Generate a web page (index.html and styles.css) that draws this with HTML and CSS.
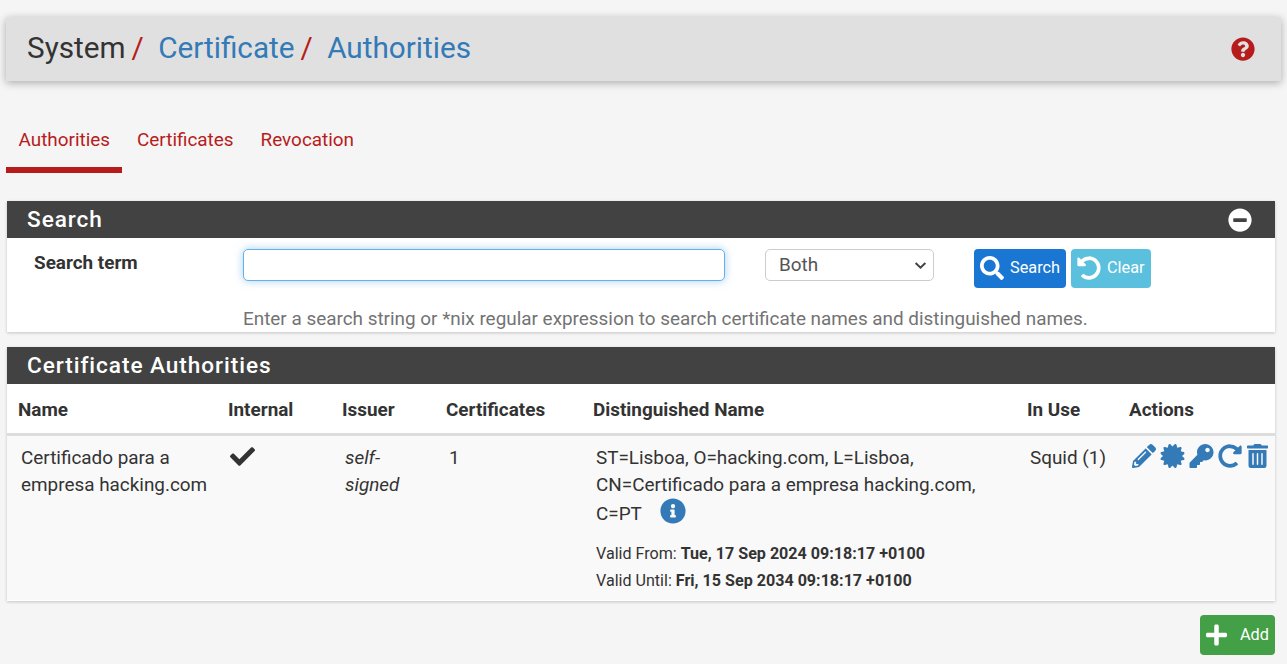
FILE: index.html
```html
<!DOCTYPE html>
<html lang="en">
<head>
<meta charset="utf-8">
<title>System / Certificate / Authorities</title>
<link rel="stylesheet" href="styles.css">
</head>
<body>
<header class="page-header">
  <h1 class="crumbs">
    <span>System</span><span class="sep">/</span>
    <a href="#">Certificate</a><span class="sep">/</span>
    <a href="#">Authorities</a>
  </h1>
  <svg class="help-icon" viewBox="0 0 512 512"><path d="M504 256c0 136.997-111.043 248-248 248S8 392.997 8 256C8 119.083 119.043 8 256 8s248 111.083 248 248zM262.655 90c-54.497 0-89.255 22.957-116.549 63.758-3.536 5.286-2.353 12.415 2.715 16.258l34.699 26.31c5.205 3.947 12.621 3.008 16.665-2.122 17.864-22.658 30.113-35.797 57.303-35.797 20.429 0 45.698 13.148 45.698 32.958 0 14.976-12.363 22.667-32.534 33.976C247.128 238.528 216 254.941 216 296v4c0 6.627 5.373 12 12 12h56c6.627 0 12-5.373 12-12v-1.333c0-28.462 83.186-29.647 83.186-106.667 0-58.002-60.165-102-116.531-102zM256 338c-25.365 0-46 20.635-46 46 0 25.364 20.635 46 46 46s46-20.636 46-46c0-25.365-20.635-46-46-46z"/></svg>
</header>

<nav class="tabs">
  <a class="tab active" href="#">Authorities</a>
  <a class="tab" href="#">Certificates</a>
  <a class="tab" href="#">Revocation</a>
</nav>

<section class="panel search-panel">
  <div class="panel-heading">
    <h2>Search</h2>
    <svg class="collapse-icon" viewBox="0 0 512 512"><circle class="collapse-bg" cx="256" cy="256" r="200"/><path d="M256 8C119 8 8 119 8 256s111 248 248 248 248-111 248-248S393 8 256 8zM124 296c-6.6 0-12-5.4-12-12v-56c0-6.6 5.4-12 12-12h264c6.6 0 12 5.4 12 12v56c0 6.6-5.4 12-12 12H124z"/></svg>
  </div>
  <div class="search-body">
    <div class="search-row">
      <label class="search-label">Search term</label>
      <input class="search-input" type="text">
      <div class="select-box">
        <span>Both</span>
        <svg class="chevron" viewBox="0 0 12 8"><path d="M1.5 1.8 6 6l4.5-4.2"/></svg>
      </div>
      <div class="btns">
        <a class="btn btn-search" href="#"><svg class="btn-icon" viewBox="0 0 512 512"><path d="M505 442.7L405.3 343c-4.5-4.5-10.6-7-17-7H372c27.6-35.3 44-79.7 44-128C416 93.1 322.9 0 208 0S0 93.1 0 208s93.1 208 208 208c48.3 0 92.7-16.4 128-44v16.3c0 6.4 2.5 12.5 7 17l99.7 99.7c9.4 9.4 24.6 9.4 33.9 0l28.3-28.3c9.4-9.4 9.4-24.6.1-34zM208 336c-70.7 0-128-57.2-128-128 0-70.7 57.2-128 128-128 70.7 0 128 57.2 128 128 0 70.7-57.2 128-128 128z"/></svg>Search</a>
        <a class="btn btn-clear" href="#"><svg class="btn-icon" viewBox="0 0 512 512"><path d="M255.545 8c-66.269.119-126.438 26.233-170.86 68.685L48.971 40.971C33.851 25.851 8 36.559 8 57.941V192c0 13.255 10.745 24 24 24h134.059c21.382 0 32.09-25.851 16.971-40.971l-41.75-41.75c30.864-28.899 70.801-44.907 113.23-45.273 92.398-.798 170.283 73.977 169.484 169.442C423.236 348.009 349.816 424 256 424c-41.127 0-79.997-14.678-110.63-41.556-4.743-4.161-11.906-3.908-16.368.553L89.34 422.659c-4.872 4.872-4.631 12.815.482 17.433C133.798 479.813 192.074 504 256 504c136.966 0 247.999-111.033 248-247.998C504.001 119.193 392.354 7.755 255.545 8z"/></svg>Clear</a>
      </div>
    </div>
    <p class="help-text">Enter a search string or *nix regular expression to search certificate names and distinguished names.</p>
  </div>
</section>

<section class="panel ca-panel">
  <div class="panel-heading">
    <h2>Certificate Authorities</h2>
  </div>
  <table class="ca-table">
    <colgroup>
      <col class="c-name"><col class="c-internal"><col class="c-issuer"><col class="c-certs"><col class="c-dn"><col class="c-use"><col class="c-actions">
    </colgroup>
    <thead>
      <tr><th>Name</th><th>Internal</th><th>Issuer</th><th>Certificates</th><th>Distinguished Name</th><th>In Use</th><th>Actions</th></tr>
    </thead>
    <tbody>
      <tr>
        <td class="td-tight">Certificado para a empresa hacking.com</td>
        <td><svg class="check" viewBox="0 0 512 512"><path d="M173.898 439.404l-166.4-166.4c-9.997-9.997-9.997-26.206 0-36.204l36.203-36.204c9.997-9.998 26.207-9.998 36.204 0L192 312.69 432.095 72.596c9.997-9.997 26.207-9.997 36.204 0l36.203 36.204c9.997 9.997 9.997 26.206 0 36.204l-294.4 294.401c-9.998 9.997-26.207 9.997-36.204-.001z"/></svg></td>
        <td><em>self-signed</em></td>
        <td>1</td>
        <td>
          <div class="dn">ST=Lisboa, O=hacking.com, L=Lisboa, CN=Certificado para a empresa hacking.com, C=PT<svg class="info" viewBox="0 0 512 512"><path d="M256 8C119.043 8 8 119.083 8 256c0 136.997 111.043 248 248 248s248-111.003 248-248C504 119.083 392.957 8 256 8zm0 110c23.196 0 42 18.804 42 42s-18.804 42-42 42-42-18.804-42-42 18.804-42 42-42zm56 254c0 6.627-5.373 12-12 12h-88c-6.627 0-12-5.373-12-12v-24c0-6.627 5.373-12 12-12h12v-64h-12c-6.627 0-12-5.373-12-12v-24c0-6.627 5.373-12 12-12h64c6.627 0 12 5.373 12 12v100h12c6.627 0 12 5.373 12 12v24z"/></svg></div>
          <div class="valid">Valid From: <b>Tue, 17 Sep 2024 09:18:17 +0100</b></div>
          <div class="valid">Valid Until: <b>Fri, 15 Sep 2034 09:18:17 +0100</b></div>
        </td>
        <td class="td-tight">Squid (1)</td>
        <td>
          <div class="actions">
            <svg class="act" viewBox="0 0 512 512"><path d="M497.9 142.1l-46.1 46.1c-4.7 4.7-12.3 4.7-17 0l-111-111c-4.7-4.7-4.7-12.3 0-17l46.1-46.1c18.7-18.7 49.1-18.7 67.9 0l60.1 60.1c18.8 18.7 18.8 49.1 0 67.9zM284.2 99.8L21.6 362.4.4 483.9c-2.9 16.4 11.4 30.6 27.8 27.8l121.5-21.3 262.6-262.6c4.7-4.7 4.7-12.3 0-17l-111-111c-4.8-4.7-12.4-4.7-17.1 0zM124.1 339.9c-5.5-5.5-5.5-14.3 0-19.8l154-154c5.5-5.5 14.3-5.5 19.8 0s5.5 14.3 0 19.8l-154 154c-5.5 5.5-14.3 5.5-19.8 0zM88 424h48v36.3l-64.5 11.3-31.1-31.1L51.7 376H88v48z"/></svg>
            <svg class="act act-wide" viewBox="0 0 512 512"><path d="M458.622 255.92l45.985-45.005c13.708-12.977 7.316-36.039-10.664-40.339l-62.65-15.99 17.661-62.015c4.991-17.838-11.829-34.663-29.661-29.671l-61.994 17.667-15.984-62.671C337.085.197 313.765-6.276 300.99 7.228L256 53.57 211.011 7.229c-12.63-13.351-36.047-7.234-40.325 10.668l-15.984 62.671-61.995-17.667C74.87 57.907 58.056 74.738 63.046 92.572l17.661 62.015-62.65 15.989C.069 174.878-6.31 197.944 7.392 210.915l45.985 45.005-45.985 45.004c-13.708 12.977-7.316 36.039 10.664 40.339l62.65 15.99-17.661 62.015c-4.991 17.838 11.829 34.663 29.661 29.671l61.994-17.667 15.984 62.671c4.439 18.575 27.696 24.018 40.325 10.668L256 458.61l44.989 46.001c12.5 13.488 35.987 7.486 40.325-10.668l15.984-62.671 61.994 17.667c17.836 4.994 34.651-11.837 29.661-29.671l-17.661-62.015 62.65-15.99c17.987-4.302 24.366-27.367 10.664-40.339l-45.984-45.004z"/></svg>
            <svg class="act act-wide" viewBox="0 0 512 512"><path d="M512 176.001C512 273.203 433.202 352 336 352c-11.22 0-22.19-1.062-32.827-3.069l-24.012 27.014A23.999 23.999 0 0 1 261.223 384H224v40c0 13.255-10.745 24-24 24h-40v40c0 13.255-10.745 24-24 24H24c-13.255 0-24-10.745-24-24v-78.059c0-6.365 2.529-12.47 7.029-16.971l161.802-161.802C163.108 213.814 160 195.271 160 176 160 78.798 238.797.001 335.999 0 433.488-.001 512 78.511 512 176.001zM336 128c0 26.51 21.49 48 48 48s48-21.49 48-48-21.49-48-48-48-48 21.49-48 48z"/></svg>
            <svg class="act" viewBox="0 0 512 512"><path d="M256.455 8c66.269.119 126.437 26.233 170.859 68.685l35.715-35.714C478.149 25.851 504 36.559 504 57.941V192c0 13.255-10.745 24-24 24H345.941c-21.382 0-32.09-25.851-16.971-40.971l41.75-41.75c-30.864-28.899-70.801-44.907-113.23-45.273-92.398-.798-170.283 73.977-169.484 169.442C88.764 348.009 162.184 424 256 424c41.127 0 79.997-14.678 110.63-41.556 4.743-4.161 11.906-3.908 16.368.553l39.662 39.662c4.872 4.872 4.631 12.815-.482 17.433C378.202 479.813 319.926 504 256 504 119.034 504 8.001 392.967 8 256.002 7.999 119.193 119.646 7.755 256.455 8z"/></svg>
            <svg class="act act-trash" viewBox="0 0 448 512"><path d="M32 464a48 48 0 0 0 48 48h288a48 48 0 0 0 48-48V128H32zm272-256a16 16 0 0 1 32 0v224a16 16 0 0 1-32 0zm-96 0a16 16 0 0 1 32 0v224a16 16 0 0 1-32 0zm-96 0a16 16 0 0 1 32 0v224a16 16 0 0 1-32 0zM432 32H312l-9.4-18.7A24 24 0 0 0 281.1 0H166.8a23.72 23.72 0 0 0-21.4 13.3L136 32H16A16 16 0 0 0 0 48v32a16 16 0 0 0 16 16h416a16 16 0 0 0 16-16V48a16 16 0 0 0-16-16z"/></svg>
          </div>
        </td>
      </tr>
    </tbody>
  </table>
</section>

<div class="footer-actions">
  <a class="btn btn-add" href="#"><svg class="add-icon" viewBox="0 0 448 512"><path d="M416 208H272V64c0-17.67-14.33-32-32-32h-32c-17.67 0-32 14.33-32 32v144H32c-17.67 0-32 14.33-32 32v32c0 17.67 14.33 32 32 32h144v144c0 17.67 14.33 32 32 32h32c17.67 0 32-14.33 32-32V304h144c17.67 0 32-14.33 32-32v-32c0-17.67-14.33-32-32-32z"/></svg>Add</a>
</div>
</body>
</html>
```

FILE: styles.css
```css
* { box-sizing: border-box; }
html, body { height: 100%; }
body {
  margin: 0;
  padding: 17px 6px 0 6px;
  background: #f5f5f5;
  color: #333;
  font-family: Roboto, "Liberation Sans", sans-serif;
  font-size: 18.9px;
  line-height: 27px;
  overflow: hidden;
}
a { text-decoration: none; color: #337ab7; }

.page-header {
  display: flex;
  align-items: center;
  justify-content: space-between;
  height: 64px;
  padding: 0 27px 0 21px;
  background: #e0e0e0;
  box-shadow: 0 2px 8px rgba(0,0,0,.3);
}
.crumbs {
  margin: -2px 0 0;
  font-size: 29.7px;
  font-weight: 400;
  line-height: 40px;
  color: #333;
}
.sep { color: #b71c1c; margin: 0 7px 0 6px; }
.help-icon { width: 24px; height: 24px; margin-right: -1px; fill: #b71c1c; }

.tabs { display: flex; margin-top: 29px; height: 63px; }
.tab {
  padding: 16px 12px 0 12.5px;
  margin-right: 2.5px;
  color: #b71c1c;
  height: 63px;
}
.tab.active { border-bottom: 6px solid #b71c1c; }

.panel {
  width: 1268px;
  margin-left: 1px;
  background: #fff;
  box-shadow: 0 1px 3px rgba(0,0,0,.2);
}
.search-panel { margin-top: 28px; height: 131px; }
.ca-panel { margin-top: 15px; height: 254px; }
.panel-heading {
  display: flex;
  align-items: center;
  justify-content: space-between;
  height: 37px;
  padding: 0 23px 0 20px;
  background: #424242;
  color: #fff;
}
.panel-heading h2 {
  margin: 0;
  font-size: 22.6px;
  font-weight: 500;
  letter-spacing: .95px;
  line-height: 37px;
}
.collapse-icon { width: 24px; height: 24px; fill: #fff; }
.collapse-bg { fill: #424242; }

.search-body { padding: 11px 0 0 0; }
.search-row { display: flex; align-items: flex-start; height: 56px; }
.search-label {
  width: 236px;
  padding-left: 27px;
  font-weight: 700;
  line-height: 27px;
  color: #333;
}
.search-input {
  width: 482px;
  height: 32px;
  border: 1px solid #66afe9;
  border-radius: 5px;
  background: #fff;
  box-shadow: 0 0 8px rgba(102,175,233,.6);
  outline: none;
}
.select-box {
  display: flex;
  align-items: center;
  justify-content: space-between;
  width: 169px;
  height: 32px;
  margin-left: 40px;
  padding: 0 6px 2px 13px;
  border: 1px solid #ccc;
  border-radius: 5px;
  color: #555;
}
.chevron { width: 13px; height: 9px; margin-top: 2px; fill: none; stroke: #444; stroke-width: 1.9; }
.btns { display: flex; gap: 5px; margin-left: 40px; }
.btn {
  display: inline-flex;
  align-items: center;
  height: 39px;
  padding-bottom: 1px;
  border-radius: 4px;
  color: #fff;
  font-size: 16.3px;
  line-height: 20px;
}
.btn-search { width: 92px; padding-left: 6px; background: #1976d2; }
.btn-clear { width: 80px; padding-left: 6px; background: #5bc0de; }
.btn-icon { width: 24px; height: 24px; margin-right: 6px; fill: #fff; }
.help-text { margin: 0; padding-left: 236px; color: #737373; line-height: 27px; }

.ca-table {
  width: 1268px;
  table-layout: fixed;
  border-collapse: collapse;
}
.c-name { width: 210px; }
.c-internal { width: 114px; }
.c-issuer { width: 104px; }
.c-certs { width: 147px; }
.c-dn { width: 434px; }
.c-use { width: 102px; }
.c-actions { width: 157px; }
.ca-table th {
  height: 50px;
  padding: 2px 0 0 11px;
  text-align: left;
  font-weight: 700;
  border-bottom: 3px solid #ddd;
}
.ca-table td {
  padding: 8px 14px 6px 14px;
  vertical-align: top;
  background: #f9f9f9;
}
.ca-table .td-tight { padding-right: 0; }
.check { display: block; width: 25px; height: 25px; margin: 0 0 0 -1px; fill: #333; }
.dn svg { vertical-align: -4px; }
.info { width: 26px; height: 26px; margin-left: 18px; fill: #337ab7; }
.valid { font-size: 16.1px; }
.dn { margin-bottom: 13px; }
.actions { display: flex; gap: 4px; margin-right: -10px; }
.act { width: 24px; height: 24px; fill: #337ab7; flex: none; }
.act-wide { width: 25px; }
.act-trash { width: 23px; }

.footer-actions { display: flex; justify-content: flex-end; width: 1269px; margin-top: 14px; }
.btn-add { width: 75px; height: 40px; padding-left: 6px; background: #43a047; }
.add-icon { width: 21px; height: 24px; margin-right: 13px; fill: #fff; }
```
